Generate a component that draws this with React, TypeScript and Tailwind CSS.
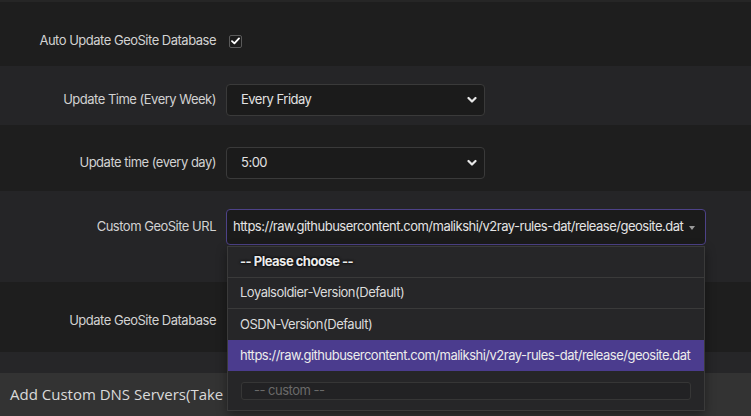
import React from "react";

const labelCls = "w-[216px] shrink-0 text-right whitespace-nowrap";

function Chevron() {
  return (
    <svg width="10" height="7" viewBox="0 0 10 7" className="absolute right-[7px] top-1/2 -translate-y-1/2">
      <path d="M1.5 1.5 L5 5 L8.5 1.5" stroke="#e8e8e8" strokeWidth="2.2" fill="none" strokeLinecap="round" strokeLinejoin="round" />
    </svg>
  );
}

function FakeSelect({ value }: { value: string }) {
  return (
    <div className="relative ml-[10px] w-[259px] h-[32px] rounded-[4px] border border-[#3a3a3a] bg-[#1b1b1b] flex items-center pl-[14px] text-[#e2e2e2]">
      {value}
      <Chevron />
    </div>
  );
}

export default function App() {
  const url = "https://raw.githubusercontent.com/malikshi/v2ray-rules-dat/release/geosite.dat";
  return (
    <div className="relative w-[751px] h-[416px] overflow-hidden bg-[#1e1e1e] text-[13px] tracking-[-0.5px] text-[#d2d2d2] font-['Inter','Noto_Sans',sans-serif]">
      <div className="h-[2px] bg-[#262626]" />

      {/* Auto update */}
      <div className="h-[64px] bg-[#1e1e1e] pt-[14px]">
        <div className="flex items-center h-[50px]">
          <div className={labelCls}>Auto Update GeoSite Database</div>
          <div className="ml-[13px] w-[13px] h-[13px] rounded-[2px] border border-[#5a5a5a] bg-[#1b1b1b] flex items-center justify-center">
            <svg width="9" height="8" viewBox="0 0 9 8">
              <path d="M1 4.2 L3.4 6.4 L8 1.4" stroke="#ffffff" strokeWidth="1.8" fill="none" strokeLinecap="round" strokeLinejoin="round" />
            </svg>
          </div>
        </div>
      </div>

      {/* Weekly */}
      <div className="h-[59px] bg-[#252527] pt-[18px]">
        <div className="flex items-center">
          <div className={labelCls}>Update Time (Every Week)</div>
          <FakeSelect value="Every Friday" />
        </div>
      </div>

      {/* Daily */}
      <div className="h-[66px] bg-[#1e1e1e] pt-[22px]">
        <div className="flex items-center">
          <div className={labelCls}>Update time (every day)</div>
          <FakeSelect value="5:00" />
        </div>
      </div>

      {/* Custom URL */}
      <div className="h-[91px] bg-[#252527] pt-[18px]">
        <div className="flex items-center">
          <div className={labelCls}>Custom GeoSite URL</div>
          <div className="relative ml-[10px] w-[480px] h-[36px] rounded-[4px] border border-[#4d4288] bg-[#1b1b1b] flex items-center pl-[6px] text-[#e4e4e4] whitespace-nowrap">
            {url}
            <svg width="6" height="4" viewBox="0 0 6 4" className="absolute right-[10px] top-[16px]">
              <path d="M0 0 L6 0 L3 4 Z" fill="#9a9a9a" />
            </svg>
          </div>
        </div>
      </div>

      {/* Update database */}
      <div className="h-[70px] bg-[#1e1e1e] pt-[14px]">
        <div className="flex items-center h-[50px]">
          <div className={labelCls}>Update GeoSite Database</div>
        </div>
      </div>

      <div className="h-[21px] bg-[#262628]" />

      <div className="h-[43px] bg-[#333333] flex items-center px-[10px] text-[15px] tracking-normal text-[#dadada] font-['Open_Sans',sans-serif] whitespace-nowrap">
        Add Custom DNS Servers(Take
      </div>

      {/* Dropdown overlay */}
      <div className="absolute left-[227px] top-[246px] w-[478px] h-[165px] bg-[#262628] border border-[#3a3a3a] shadow-[0_4px_10px_rgba(0,0,0,0.4)] flex flex-col whitespace-nowrap">
        <div className="h-[31px] flex items-center px-[12px] border-b border-[#3a3a3a] font-bold text-[#ececec] [text-shadow:0_0_2px_#000,0_0_3px_#000]">
          -- Please choose --
        </div>
        <div className="h-[31px] flex items-center px-[12px] border-b border-[#3a3a3a] text-[#dcdcdc]">
          Loyalsoldier-Version(Default)
        </div>
        <div className="h-[31px] flex items-center px-[12px] text-[#dcdcdc]">OSDN-Version(Default)</div>
        <div className="h-[31px] flex items-center px-[12px] bg-[#4b3c8e] text-[#ececec]">{url}</div>
        <div className="flex-1 pt-[11px] px-[13px]">
          <div className="h-[18px] rounded-[3px] border border-[#363636] bg-[#222224] flex items-center pl-[12px] text-[#6a6a6a]">
            -- custom --
          </div>
        </div>
      </div>
    </div>
  );
}
